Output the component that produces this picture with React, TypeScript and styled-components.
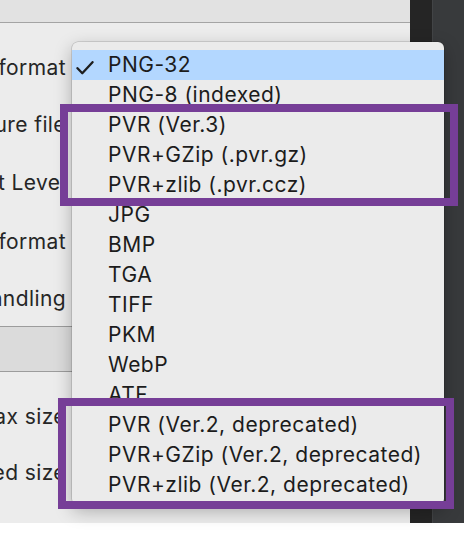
import React from 'react'
import styled, { createGlobalStyle } from 'styled-components'

const GlobalStyle = createGlobalStyle`
  html, body {
    margin: 0;
    padding: 0;
    background: #ffffff;
  }
  body {
    font-family: Inter, "Liberation Sans", sans-serif;
    -webkit-font-smoothing: antialiased;
  }
`

const Page = styled.div`
  position: relative;
  width: 464px;
  height: 540px;
  overflow: hidden;
`

const Window = styled.div`
  display: flex;
  height: 523px;
`

const Panel = styled.div`
  flex: 1;
  display: flex;
  flex-direction: column;
  background: #ececec;
  min-width: 0;
`

const TabBar = styled.div`
  height: 22px;
  flex-shrink: 0;
  background: #e2e2e2;
  border-bottom: 1px solid #a4a4a4;
`

const Section = styled.div<{ $top: number }>`
  display: flex;
  flex-direction: column;
  padding-top: ${({ $top }) => $top}px;
  flex: 1;
`

const SectionHeader = styled.div`
  height: 44px;
  flex-shrink: 0;
  background: #dbdbdb;
  border-top: 1px solid #9c9c9c;
  border-bottom: 1px solid #9c9c9c;
`

const Row = styled.div<{ $h: number }>`
  height: ${({ $h }) => $h}px;
  width: 66px;
  display: flex;
  align-items: center;
  justify-content: flex-end;
`

const Label = styled.span`
  font-size: 21px;
  letter-spacing: 0.4px;
  color: #262626;
  white-space: nowrap;
`

const DarkStrip = styled.div`
  width: 22px;
  background: #252525;
`

const SideStrip = styled.div`
  width: 32px;
  background: #383a3c;
  border-left: 1px solid #424446;
  box-sizing: border-box;
`

const Menu = styled.div`
  position: absolute;
  left: 72px;
  top: 42px;
  width: 372px;
  padding: 8px 0 5px;
  background: #ebebeb;
  border-radius: 6px;
  box-shadow: 0 0 0 0.5px rgba(0, 0, 0, 0.22), 0 6px 18px rgba(0, 0, 0, 0.28);
`

const Item = styled.div<{ $selected?: boolean }>`
  position: relative;
  height: 30px;
  line-height: 30px;
  padding-left: 36px;
  font-size: 21px;
  letter-spacing: 0.5px;
  color: #1c1c1c;
  white-space: nowrap;
  background: ${({ $selected }) => ($selected ? '#b3d7ff' : 'transparent')};
`

const Check = styled.svg`
  position: absolute;
  left: 4px;
  top: 11px;
`

const Annotation = styled.div<{ $x: number; $y: number; $w: number; $h: number }>`
  position: absolute;
  left: ${({ $x }) => $x}px;
  top: ${({ $y }) => $y}px;
  width: ${({ $w }) => $w}px;
  height: ${({ $h }) => $h}px;
  box-sizing: border-box;
  border: 8px solid #763e97;
`

const outputRows: [string, number][] = [
  ['Texture format', 57],
  ['Texture file', 57],
  ['Png Opt Level', 59],
  ['Pixel format', 58],
  ['Alpha handling', 56],
]

const sizeRows: [string, number][] = [
  ['Max size', 56],
  ['Fixed size', 56],
]

const formats = [
  'PNG-32',
  'PNG-8 (indexed)',
  'PVR (Ver.3)',
  'PVR+GZip (.pvr.gz)',
  'PVR+zlib (.pvr.ccz)',
  'JPG',
  'BMP',
  'TGA',
  'TIFF',
  'PKM',
  'WebP',
  'ATF',
  'PVR (Ver.2, deprecated)',
  'PVR+GZip (Ver.2, deprecated)',
  'PVR+zlib (Ver.2, deprecated)',
]

export default function App() {
  return (
    <Page>
      <GlobalStyle />
      <Window>
        <Panel>
          <TabBar />
          <Section $top={16}>
            {outputRows.map(([label, h]) => (
              <Row key={label} $h={h}>
                <Label>{label}</Label>
              </Row>
            ))}
          </Section>
          <SectionHeader />
          <Section $top={16}>
            {sizeRows.map(([label, h]) => (
              <Row key={label} $h={h}>
                <Label>{label}</Label>
              </Row>
            ))}
          </Section>
        </Panel>
        <DarkStrip />
        <SideStrip />
      </Window>

      <Menu>
        {formats.map((f, i) => (
          <Item key={f} $selected={i === 0}>
            {i === 0 && (
              <Check width="18" height="14" viewBox="0 0 18 14">
                <path d="M1.5 7.2 L6.3 12.2 L16.5 1.2" fill="none" stroke="#1e1e1e" strokeWidth="2.3" strokeLinecap="round" strokeLinejoin="round" />
              </Check>
            )}
            {f}
          </Item>
        ))}
      </Menu>

      <Annotation $x={60} $y={104} $w={398} $h={102} />
      <Annotation $x={58} $y={398} $w={396} $h={111} />
    </Page>
  )
}
